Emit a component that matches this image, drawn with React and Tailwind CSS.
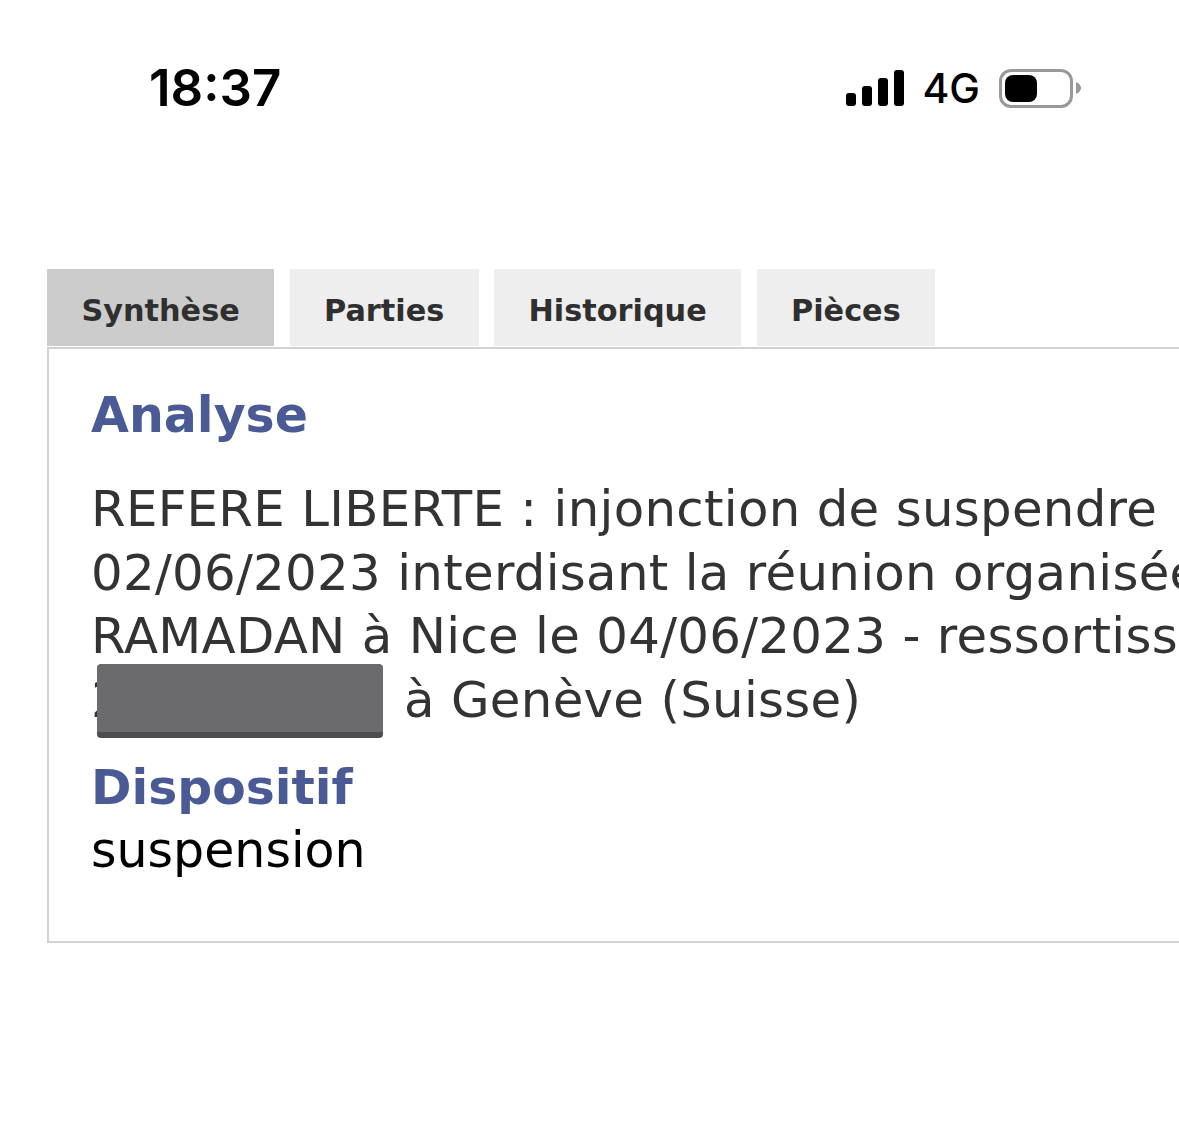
const tabs = [
  { label: 'Synthèse', active: true },
  { label: 'Parties' },
  { label: 'Historique' },
  { label: 'Pièces' },
];

const StatusBar = () => (
  <div className="flex h-[176px] items-start justify-between pl-[149px] pr-[98px] pt-[59px]">
    <span className="text-[51px] font-semibold leading-[58px] text-black font-['Inter',sans-serif]">18:37</span>
    <div className="flex items-center pt-[9px]">
      <div className="flex items-end gap-[6px]">
        <span className="h-[13px] w-[10px] rounded-[3px] bg-black" />
        <span className="h-[20px] w-[10px] rounded-[3px] bg-black" />
        <span className="h-[28px] w-[10px] rounded-[3px] bg-black" />
        <span className="h-[36px] w-[10px] rounded-[3px] bg-black" />
      </div>
      <span className="ml-[18px] text-[41px] font-medium leading-[40px] text-black font-['Inter',sans-serif]">4G</span>
      <div className="ml-[19px] flex items-center">
        <div className="flex h-[39px] w-[74px] items-center rounded-[12px] border-[3px] border-[#999999] px-[3px]">
          <span className="h-[27px] w-[32px] rounded-[8px] bg-black" />
        </div>
        <svg className="ml-[3px]" width="5" height="12" viewBox="0 0 5 12">
          <path d="M0 0 C3 1 5 3.500 5 6 C5 8.500 3 11 0 12 Z" fill="#999999" />
        </svg>
      </div>
    </div>
  </div>
);

export default function App() {
  return (
    <div className="h-[1140px] w-[1179px] overflow-hidden bg-white font-['DejaVu_Sans',sans-serif]">
      <StatusBar />
      <div className="pl-[47px] pt-[93px]">
        <div className="mb-[1px] flex gap-[15.500px]">
          {tabs.map((t) => (
            <div
              key={t.label}
              className={`flex h-[77px] items-center px-[34.400px] pt-[6px] text-[30.300px] font-bold text-[#2f2f2f] ${
                t.active ? 'bg-[#cccccc]' : 'bg-[#eeeeee]'
              }`}
            >
              {t.label}
            </div>
          ))}
        </div>
        <div className="h-[596px] w-[1300px] border-2 border-[#d2d2d2] pl-[42px] pt-[35px] whitespace-nowrap">
          <h2 className="text-[49px] font-bold leading-[64px] text-[#4a5a94]">Analyse</h2>
          <div className="mt-[30px] text-[49.800px] leading-[63.500px] tracking-[0.300px] text-[#333333]">
            <p>REFERE LIBERTE : injonction de suspendre</p>
            <p>02/06/2023 interdisant la réunion organisée par</p>
            <p>RAMADAN à Nice le 04/06/2023 - ressortissant</p>
            <p>
              <span className="relative mr-[22px] inline-flex w-[291px] justify-between">
                <span>2</span>
                <span>2</span>
                <span className="absolute left-[6px] top-[-5px] h-[74px] w-[286px] rounded-[4px] border-b-[6px] border-[#4d4d50] bg-[#6b6b6e]" />
              </span>
              à Genève (Suisse)
            </p>
          </div>
          <h2 className="mt-[24px] text-[48.800px] font-bold leading-[64px] text-[#4a5a94]">Dispositif</h2>
          <p className="-mt-[1px] text-[49px] leading-[63.500px] text-black">suspension</p>
        </div>
      </div>
    </div>
  );
}
